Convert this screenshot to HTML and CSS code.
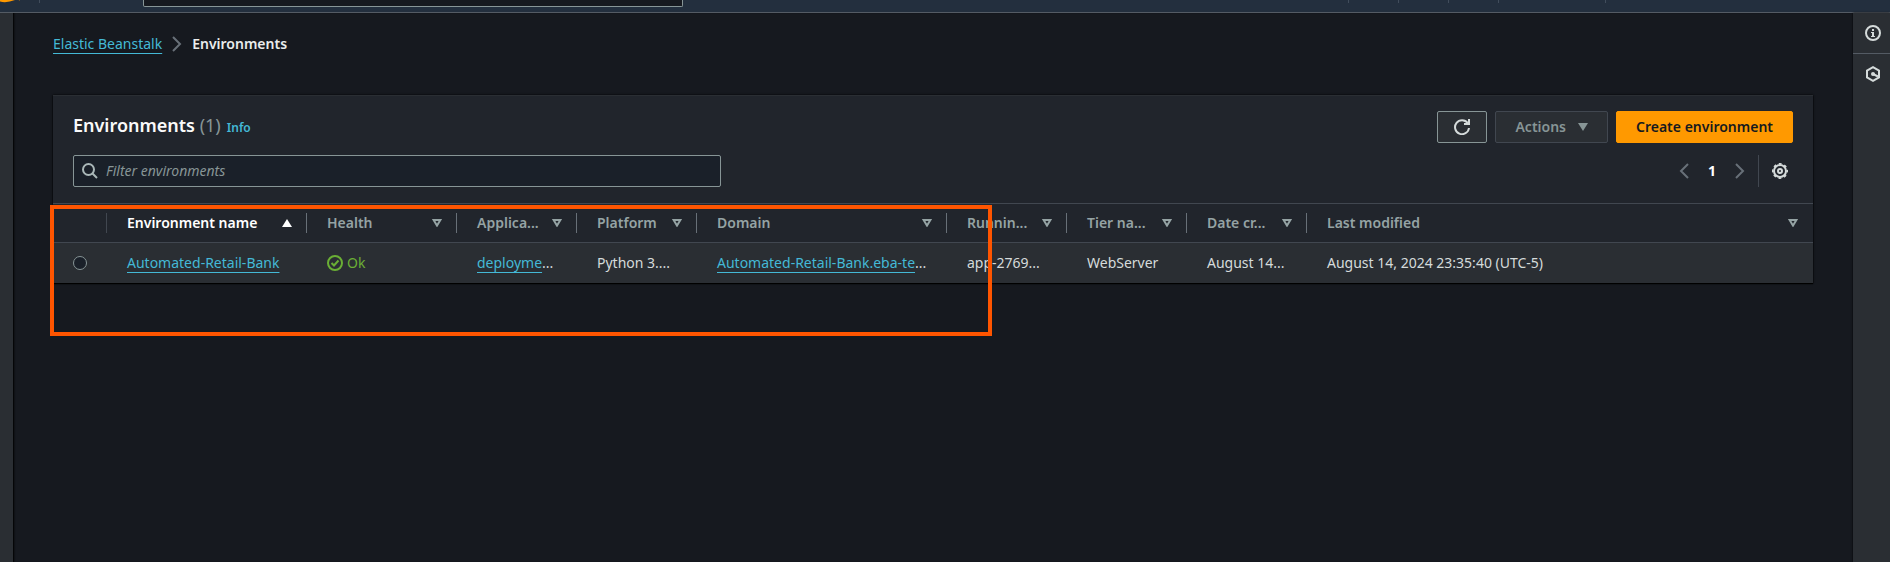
FILE: index.html
```html
<!DOCTYPE html>
<html lang="en">
<head>
<meta charset="utf-8">
<title>Environments - Elastic Beanstalk</title>
<link rel="stylesheet" href="styles.css">
</head>
<body>
<header class="topbar">
  <svg class="logo" width="20" height="12" viewBox="0 0 20 12" aria-hidden="true"><path d="M0 1.600Q7 3.200 15 0H0z" fill="#f90"/><path d="M18.500 0h2l-1 1z" fill="#f90" opacity=".4"/></svg>
  <span class="divider"></span>
  <div class="topsearch"></div>
  <div class="topnav">
    <span class="item item-s"></span>
    <span class="item item-s"></span>
    <span class="item item-s"></span>
    <span class="item item-m"></span>
    <span class="item item-l"></span>
  </div>
</header>
<div class="layout">
  <aside class="rail-left"></aside>
  <main class="content">
    <nav class="breadcrumb" aria-label="Breadcrumb">
      <a class="link" href="#">Elastic Beanstalk</a>
      <svg width="16" height="16" viewBox="0 0 16 16" fill="none" stroke="#687078" stroke-width="2" aria-hidden="true"><path d="M4 1l7 7-7 7"/></svg>
      <span class="current">Environments</span>
    </nav>
    <section class="card">
      <div class="card-head">
        <div class="title-row">
          <div class="heading">
            <h1 class="title">Environments <span class="count">(1)</span></h1>
            <a class="info" href="#">Info</a>
          </div>
          <div class="actions">
            <button class="btn btn-icon" type="button" aria-label="Refresh">
              <svg width="16" height="16" viewBox="0 0 16 16" fill="none" stroke="#d5dbdb" stroke-width="2"><path d="M15 9a7 7 0 1 1-1.300-5"/><path d="M15 0v5h-5"/></svg>
            </button>
            <button class="btn btn-disabled" type="button" disabled>Actions
              <svg width="10" height="8" viewBox="0 0 10 8" fill="#879596" aria-hidden="true"><path d="M0 0h10L5 8z"/></svg>
            </button>
            <button class="btn btn-primary" type="button">Create environment</button>
          </div>
        </div>
        <div class="tool-row">
          <label class="search">
            <svg width="16" height="16" viewBox="0 0 16 16" fill="none" stroke="#aab7b8" stroke-width="2" aria-hidden="true"><circle cx="6.500" cy="6.500" r="5.500"/><path d="M10.500 10.500L15 15"/></svg>
            <input class="search-input" type="text" placeholder="Filter environments" aria-label="Filter environments">
          </label>
          <div class="pager">
            <button class="plain" type="button" aria-label="Previous page"><svg width="16" height="16" viewBox="0 0 16 16" fill="none" stroke="#687078" stroke-width="2"><path d="M12 1L5 8l7 7"/></svg></button>
            <span class="page">1</span>
            <button class="plain" type="button" aria-label="Next page"><svg width="16" height="16" viewBox="0 0 16 16" fill="none" stroke="#687078" stroke-width="2"><path d="M4 1l7 7-7 7"/></svg></button>
            <span class="pager-line"></span>
            <button class="plain" type="button" aria-label="Preferences"><svg width="16" height="16" viewBox="0 0 16 16" fill="none" stroke="#d5dbdb"><circle cx="8" cy="8" r="6" stroke-width="2"/><circle cx="8" cy="8" r="7.300" stroke-width="1.400" stroke-dasharray="2.900 2.834" stroke-dashoffset="1.450"/><circle cx="8" cy="8" r="2" stroke-width="2"/></svg></button>
          </div>
        </div>
      </div>
      <table class="table">
        <colgroup><col class="c-radio"><col class="c-name"><col class="c-health"><col class="c-s"><col class="c-s"><col class="c-domain"><col class="c-s"><col class="c-s"><col class="c-s"><col></colgroup>
        <thead>
          <tr>
            <th aria-label="Selection"><div class="th"></div></th>
            <th class="sorted"><div class="th">Environment name<svg width="10" height="8" viewBox="0 0 10 8" fill="#fff"><path d="M0 8h10L5 0z"/></svg></div></th>
            <th><div class="th">Health<svg class="sort" width="10" height="8" viewBox="0 0 10 8"><path d="M1.600 1h6.800L5 6.600z"/></svg></div></th>
            <th><div class="th">Applica...<svg class="sort" width="10" height="8" viewBox="0 0 10 8"><path d="M1.600 1h6.800L5 6.600z"/></svg></div></th>
            <th><div class="th">Platform<svg class="sort" width="10" height="8" viewBox="0 0 10 8"><path d="M1.600 1h6.800L5 6.600z"/></svg></div></th>
            <th><div class="th">Domain<svg class="sort" width="10" height="8" viewBox="0 0 10 8"><path d="M1.600 1h6.800L5 6.600z"/></svg></div></th>
            <th><div class="th">Runnin...<svg class="sort" width="10" height="8" viewBox="0 0 10 8"><path d="M1.600 1h6.800L5 6.600z"/></svg></div></th>
            <th><div class="th">Tier na...<svg class="sort" width="10" height="8" viewBox="0 0 10 8"><path d="M1.600 1h6.800L5 6.600z"/></svg></div></th>
            <th><div class="th">Date cr...<svg class="sort" width="10" height="8" viewBox="0 0 10 8"><path d="M1.600 1h6.800L5 6.600z"/></svg></div></th>
            <th><div class="th">Last modified<svg class="sort" width="10" height="8" viewBox="0 0 10 8"><path d="M1.600 1h6.800L5 6.600z"/></svg></div></th>
          </tr>
        </thead>
        <tbody>
          <tr>
            <td><input class="radio" type="radio" name="environment" aria-label="Select Automated-Retail-Bank"></td>
            <td><a class="link" href="#">Automated-Retail-Bank</a></td>
            <td><span class="status"><svg width="16" height="16" viewBox="0 0 16 16" fill="none" stroke="#6aaf35" stroke-width="2" aria-hidden="true"><circle cx="8" cy="8" r="7"/><path d="M4.500 8l2.500 2.500 4.500-5"/></svg>Ok</span></td>
            <td><a class="link" href="#">deployme</a>...</td>
            <td>Python 3....</td>
            <td><a class="link" href="#">Automated-Retail-Bank.eba-te</a>...</td>
            <td>app-2769...</td>
            <td>WebServer</td>
            <td>August 14...</td>
            <td>August 14, 2024 23:35:40 (UTC-5)</td>
          </tr>
        </tbody>
      </table>
      <div class="highlight"></div>
    </section>
  </main>
  <aside class="rail-right">
    <button class="rail-btn" type="button" aria-label="Info"><svg width="16" height="16" viewBox="0 0 16 16" fill="none" stroke="#d5dbdb" stroke-width="2"><circle cx="8" cy="8" r="7"/><path d="M7 4h2v2H7zM6 7h3v4h1v1H6v-1h1V8H6z" fill="#d5dbdb" stroke="none"/></svg></button>
    <button class="rail-btn" type="button" aria-label="Resources"><svg width="16" height="16" viewBox="0 0 16 16" fill="none" stroke="#d5dbdb" stroke-width="2"><path d="M8 1.200l6 3.400v6.800l-6 3.400-6-3.400V4.600z"/><path d="M8 8l5 2.500"/><circle cx="8" cy="8" r="2" fill="#d5dbdb" stroke="none"/></svg></button>
  </aside>
</div>
</body>
</html>
```

FILE: styles.css
```css
* { box-sizing: border-box; }
body {
  margin: 0;
  min-height: 100vh;
  display: flex;
  flex-direction: column;
  background: #16191f;
  color: #d5dbdb;
  font: 14px/22px "Noto Sans", "Open Sans", sans-serif;
}
svg { display: block; flex: none; }
button, input { font: inherit; color: inherit; }

.topbar {
  display: flex;
  align-items: flex-start;
  height: 13px;
  background: #232f3e;
  border-bottom: 1px solid #545b64;
}
.divider { width: 1px; height: 3px; margin-left: 19px; background: #414d5c; }
.topsearch {
  width: 540px;
  height: 7px;
  margin-left: 103px;
  background: #16191f;
  border: 1px solid #879596;
  border-top: 0;
  border-radius: 0 0 2px 2px;
}
.topnav { display: flex; margin-left: auto; }
.item { height: 3px; border-left: 1px solid #414d5c; }
.item-s { width: 50px; }
.item-m { width: 107px; }
.item-l { width: 285px; }

.layout { display: flex; flex: 1; }
.rail-left { width: 13px; background: #2a2e33; }
.rail-right { width: 37px; background: #2a2e33; box-shadow: 0 0 2px #000; }
.rail-btn {
  display: flex;
  align-items: center;
  justify-content: center;
  width: 100%;
  height: 40px;
  padding: 0 0 0 3px;
  background: none;
  border: 0;
}
.rail-btn:first-child { height: 41px; border-bottom: 1px solid #545b64; }

.content { flex: 1; min-width: 0; padding: 20px 40px; box-shadow: inset 2px 0 2px -1px #000; }
.breadcrumb { display: flex; align-items: center; gap: 7px; margin-bottom: 40px; }
.current { font-weight: 600; color: #eaeded; }
.link {
  color: #44b9d6;
  text-decoration: underline 1px;
  text-underline-offset: 4px;
  text-decoration-skip-ink: none;
}

.card {
  position: relative;
  background: #21252c;
  border-top: 1px solid #2a2e33;
  box-shadow: 0 1px 1px #000, 0 0 2px #000;
}
.card-head { padding: 15px 20px 16px; }
.title-row { display: flex; align-items: center; margin-bottom: 12px; }
.heading { display: flex; align-items: baseline; gap: 6px; padding-bottom: 2px; }
.title { margin: 0; font-size: 18px; font-weight: 600; line-height: 22px; color: #fafafa; }
.count { font-weight: 400; color: #879596; }
.info { font-size: 12px; font-weight: 600; color: #44b9d6; text-decoration: none; }
.actions { display: flex; gap: 8px; margin-left: auto; }
.btn {
  display: flex;
  align-items: center;
  justify-content: center;
  gap: 12px;
  height: 32px;
  padding: 0 19px;
  border: 1px solid #879596;
  border-radius: 2px;
  background: #2a2e33;
  font-weight: 600;
}
.btn-icon { width: 50px; padding: 0; }
.btn-disabled { border-color: #414750; color: #879596; }
.btn-primary { border-color: #f90; background: #f90; color: #16191f; }

.tool-row { display: flex; align-items: center; justify-content: space-between; }
.search {
  display: flex;
  align-items: center;
  gap: 8px;
  width: 648px;
  height: 32px;
  padding: 0 8px;
  background: #1a2029;
  border: 1px solid #879596;
  border-radius: 2px;
}
.search-input { flex: 1; padding: 0; border: 0; outline: 0; background: none; }
.search-input::placeholder { color: #879596; font-style: italic; opacity: 1; }
.pager { display: flex; align-items: center; padding-right: 5px; }
.plain { padding: 0; border: 0; background: none; }
.page { width: 40px; text-align: center; font-weight: 700; color: #fff; }
.pager-line { width: 1px; height: 32px; margin: 0 13px 0 10px; background: #414750; }

.table { width: 100%; table-layout: fixed; border-collapse: separate; border-spacing: 0; }
.c-radio { width: 54px; }
.c-name { width: 200px; }
.c-health { width: 150px; }
.c-s { width: 120px; }
.c-domain { width: 250px; }
th {
  padding: 9px 0;
  border-top: 1px solid #414750;
  border-bottom: 1px solid #414750;
  text-align: left;
  font-weight: 600;
  color: #95a3a4;
}
.th {
  display: flex;
  align-items: center;
  justify-content: space-between;
  height: 20px;
  padding: 0 14px 0 20px;
  border-right: 1px solid #687078;
  white-space: nowrap;
}
th:first-child .th { padding: 0; border-color: #414750; }
th:last-child .th { padding-right: 15px; border: 0; }
.sorted { color: #fff; }
.sort { fill: none; stroke: #95a3a4; stroke-width: 2; }
td { height: 40px; padding: 0 0 0 20px; background: #2a2e33; white-space: nowrap; }
.status { display: flex; align-items: center; gap: 4px; color: #6aaf35; }
.radio {
  display: block;
  appearance: none;
  width: 14px;
  height: 14px;
  margin: 0;
  border: 1px solid #879596;
  border-radius: 50%;
  background: #1a2029;
}
/* Callout frame drawn over the table's first columns */
.highlight {
  position: absolute;
  left: -3px;
  top: 109px;
  width: 942px;
  height: 131px;
  border: 4px solid #ff5500;
  pointer-events: none;
}
```
